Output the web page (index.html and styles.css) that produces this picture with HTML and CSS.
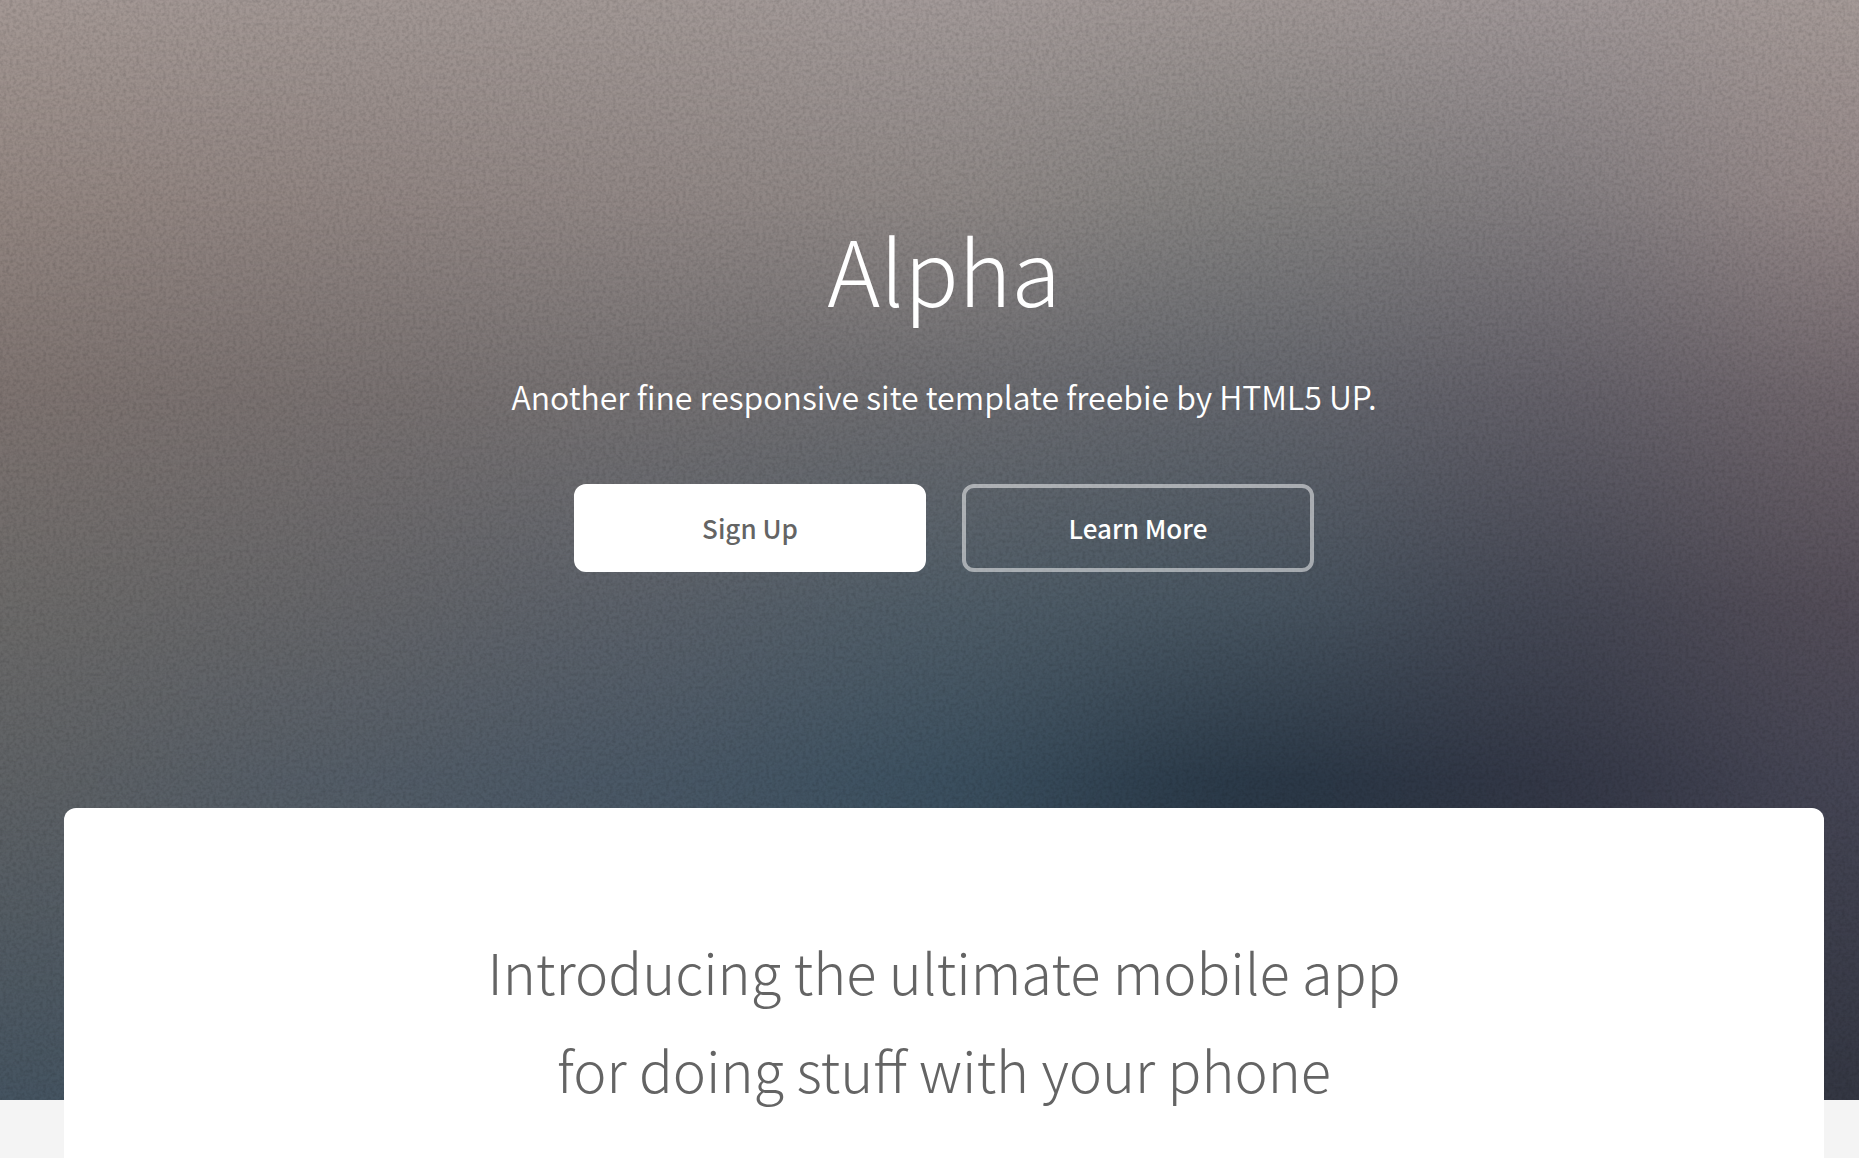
FILE: index.html
```html
<!DOCTYPE html>
<html lang="en">
<head>
  <meta charset="utf-8">
  <meta name="viewport" content="width=device-width, initial-scale=1">
  <title>Alpha</title>
  <link rel="stylesheet" href="styles.css">
</head>
<body>
  <section class="banner">
    <svg class="banner-art" viewBox="0 0 1860 1100" preserveAspectRatio="none" aria-hidden="true">
      <defs>
        <filter id="soften" filterUnits="userSpaceOnUse" x="-400" y="0" width="2660" height="1100" color-interpolation-filters="sRGB">
          <feGaussianBlur stdDeviation="110 0"/>
        </filter>
        <filter id="grain" x="0" y="0" width="100%" height="100%" color-interpolation-filters="sRGB">
          <feTurbulence type="fractalNoise" baseFrequency="0.3" numOctaves="2" seed="4"/>
          <feColorMatrix values="0 0 0 0 0  0 0 0 0 0  0 0 0 0 0  0.25 0 0 0 -0.09"/>
        </filter>
        <linearGradient id="c1" x2="0" y2="1">
          <stop offset="0" stop-color="#a49894"/><stop offset=".18" stop-color="#938681"/><stop offset=".36" stop-color="#7e7370"/><stop offset=".55" stop-color="#6c6a69"/><stop offset=".71" stop-color="#5f6265"/><stop offset="1" stop-color="#455461"/>
        </linearGradient>
        <linearGradient id="c2" x2="0" y2="1">
          <stop offset="0" stop-color="#a29794"/><stop offset=".18" stop-color="#918582"/><stop offset=".36" stop-color="#797170"/><stop offset=".55" stop-color="#666669"/><stop offset=".71" stop-color="#545d67"/><stop offset="1" stop-color="#42525f"/>
        </linearGradient>
        <linearGradient id="c3" x2="0" y2="1">
          <stop offset="0" stop-color="#a29895"/><stop offset=".18" stop-color="#918785"/><stop offset=".36" stop-color="#757172"/><stop offset=".55" stop-color="#5b616a"/><stop offset=".71" stop-color="#4a5866"/><stop offset="1" stop-color="#3c4b5a"/>
        </linearGradient>
        <linearGradient id="c4" x2="0" y2="1">
          <stop offset="0" stop-color="#a39a99"/><stop offset=".18" stop-color="#8f8886"/><stop offset=".36" stop-color="#6c6c70"/><stop offset=".55" stop-color="#4f5d68"/><stop offset=".71" stop-color="#3c5161"/><stop offset="1" stop-color="#344454"/>
        </linearGradient>
        <linearGradient id="c5" x2="0" y2="1">
          <stop offset="0" stop-color="#a09795"/><stop offset=".18" stop-color="#838180"/><stop offset=".36" stop-color="#63666d"/><stop offset=".55" stop-color="#475561"/><stop offset=".71" stop-color="#293847"/><stop offset="1" stop-color="#283441"/>
        </linearGradient>
        <linearGradient id="c6" x2="0" y2="1">
          <stop offset="0" stop-color="#9f9697"/><stop offset=".18" stop-color="#827d80"/><stop offset=".36" stop-color="#625f68"/><stop offset=".55" stop-color="#434653"/><stop offset=".71" stop-color="#323645"/><stop offset="1" stop-color="#303542"/>
        </linearGradient>
        <linearGradient id="c7" x2="0" y2="1">
          <stop offset="0" stop-color="#a59a97"/><stop offset=".18" stop-color="#958888"/><stop offset=".36" stop-color="#70666c"/><stop offset=".55" stop-color="#544d58"/><stop offset=".71" stop-color="#464655"/><stop offset="1" stop-color="#343743"/>
        </linearGradient>
      </defs>
      <g filter="url(#soften)">
        <rect x="-400" width="560" height="1100" fill="url(#c1)"/>
        <rect x="160" width="310" height="1100" fill="url(#c2)"/>
        <rect x="470" width="310" height="1100" fill="url(#c3)"/>
        <rect x="780" width="310" height="1100" fill="url(#c4)"/>
        <rect x="1090" width="310" height="1100" fill="url(#c5)"/>
        <rect x="1400" width="290" height="1100" fill="url(#c6)"/>
        <rect x="1690" width="570" height="1100" fill="url(#c7)"/>
      </g>
      <rect width="1860" height="1100" filter="url(#grain)"/>
    </svg>
    <div class="banner-content">
      <h1 class="banner-title">Alpha</h1>
      <p class="banner-tagline">Another fine responsive site template freebie by HTML5 UP.</p>
      <div class="actions">
        <button class="button button-primary" type="button">Sign Up</button>
        <button class="button button-outline" type="button">Learn More</button>
      </div>
    </div>
  </section>
  <main class="card">
    <h2 class="card-title">Introducing the ultimate mobile app<br>for doing stuff with your phone</h2>
  </main>
</body>
</html>
```
FILE: styles.css
```css
* {
  box-sizing: border-box;
}

body {
  margin: 0;
  background: #f4f4f4;
  color: #646464;
  font-family: "Source Sans Pro", "Noto Sans CJK JP", sans-serif;
  font-weight: 300;
}

.banner {
  position: relative;
  padding: 200px 0 528px 29px;
  overflow: hidden;
  color: #fff;
  text-align: center;
}

.banner-art {
  position: absolute;
  inset: 0;
  width: 100%;
  height: 100%;
}

.banner-content {
  position: relative;
}

.banner-title {
  margin: 0;
  font-size: 90px;
  font-weight: 300;
  line-height: 136px;
}

.banner-tagline {
  margin: 28px 0 56px;
  font-size: 32px;
  font-weight: 350;
  line-height: 64px;
}

.actions {
  display: flex;
  justify-content: center;
  gap: 36px;
}

.button {
  width: 352px;
  height: 88px;
  border: 4px solid #fff;
  border-radius: 12px;
  font-family: inherit;
  font-size: 26px;
  font-weight: 500;
  line-height: 40px;
}

.button-primary {
  background: #fff;
  color: #646464;
}

.button-outline {
  border-color: rgba(255, 255, 255, 0.5);
  background: transparent;
  color: #fff;
}

.card {
  position: relative;
  margin: -292px 35px 0 64px;
  padding: 114px 32px 80px;
  border-radius: 12px 12px 0 0;
  background: #fff;
  text-align: center;
}

.card-title {
  margin: 0;
  font-size: 56px;
  font-weight: 300;
  line-height: 98px;
}
```
